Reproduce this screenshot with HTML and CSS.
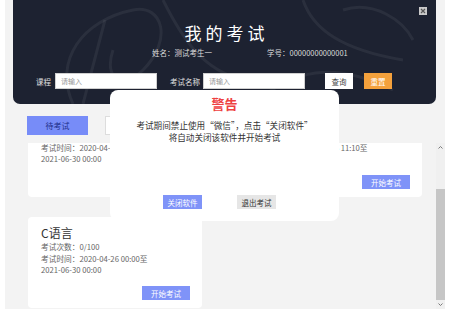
FILE: index.html
```html
<!DOCTYPE html>
<html lang="zh-CN">
<head>
  <meta charset="UTF-8">
  <title>我的考试</title>
  <meta name="viewport" content="width=device-width, initial-scale=1.0">
  <link rel="stylesheet" href="styles.css">
</head>
<body>
  <div class="page">
    <header class="banner">
      <svg class="chalk" viewBox="0 0 423 104" preserveAspectRatio="none">
        <path d="M60 104 C 40 60, 70 20, 120 10 C 150 4, 160 40, 130 70 C 110 90, 90 80, 100 50" />
        <path d="M70 104 L 92 20" />
        <path d="M150 0 C 170 40, 190 70, 230 80" />
        <path d="M290 0 C 300 30, 330 50, 390 60" />
        <path d="M330 10 C 360 0, 390 20, 400 40" />
        <path d="M240 104 C 280 70, 320 60, 380 90" />
      </svg>
      <button class="close-btn" type="button">
        <svg viewBox="0 0 8 8" width="8" height="8">
          <rect x="0" y="0" width="8" height="8" fill="#c9c9c9" />
          <path d="M2 2 L6 6 M6 2 L2 6" stroke="#555" stroke-width="1.2" />
        </svg>
      </button>
      <h1 class="title">我的考试</h1>
      <div class="student">
        <span>姓名：测试考生一</span>
        <span>学号：00000000000001</span>
      </div>
      <form class="search" autocomplete="off">
        <label for="course">课程</label>
        <input type="text" id="course" placeholder="请输入">
        <label for="examName" class="label-wide">考试名称</label>
        <input type="text" id="examName" placeholder="请输入">
        <button type="button" class="btn-query">查询</button>
        <button type="button" class="btn-reset">重置</button>
      </form>
    </header>

    <nav class="tabs">
      <span class="tab active">待考试</span>
      <span class="tab">已考试</span>
    </nav>

    <div class="exam-area">
      <div class="exam-list" id="examList">
        <div class="exam-grid">
          <div class="exam-card">
            <div class="exam-name">Java程序设计</div>
            <div class="exam-info">考试次数：0/100</div>
            <div class="exam-info">考试时间：2020-04-26 00:00至<br>2021-06-30 00:00</div>
            <button type="button" class="btn-start">开始考试</button>
          </div>
          <div class="exam-card">
            <div class="exam-name">数据结构</div>
            <div class="exam-info">考试次数：0/100</div>
            <div class="exam-info">考试时间：2020-04-26 11:10至<br>2021-06-30 00:00</div>
            <button type="button" class="btn-start">开始考试</button>
          </div>
          <div class="exam-card">
            <div class="exam-name">C语言</div>
            <div class="exam-info">考试次数：0/100</div>
            <div class="exam-info">考试时间：2020-04-26 00:00至<br>2021-06-30 00:00</div>
            <button type="button" class="btn-start">开始考试</button>
          </div>
        </div>
      </div>
      <div class="scrollbar">
        <svg class="arrow" viewBox="0 0 9 9" width="9" height="9">
          <path d="M2.5 5.5 L4.5 3.5 L6.5 5.5" />
        </svg>
        <div class="track"><span class="thumb"></span></div>
        <svg class="arrow" viewBox="0 0 9 9" width="9" height="9">
          <path d="M2.5 3.5 L4.5 5.5 L6.5 3.5" />
        </svg>
      </div>
    </div>

    <div class="modal">
      <div class="modal-title">警告</div>
      <div class="modal-text">
        考试期间禁止使用“微信”，点击“关闭软件”<br>
        将自动关闭该软件并开始考试
      </div>
      <div class="modal-actions">
        <button type="button" class="btn-close-app">关闭软件</button>
        <button type="button" class="btn-quit">退出考试</button>
      </div>
    </div>
  </div>
  <script>
    // list starts scrolled to the end
    const list = document.getElementById('examList');
    list.scrollTop = list.scrollHeight;
  </script>
</body>
</html>
```

FILE: styles.css
```css
body {
  margin: 0;
  background: #fff;
  font-family: 'Noto Sans CJK SC', 'Noto Sans', sans-serif;
  color: #333;
}
button {
  font-family: inherit;
  border: none;
  padding: 0;
  cursor: pointer;
}
.page {
  position: relative;
  margin: 0 5px;
  width: 440px;
  height: 309px;
  background: #f3f3f3;
  display: flex;
  flex-direction: column;
}
.banner {
  position: relative;
  margin: 0 9px 0 8px;
  height: 104px;
  box-sizing: border-box;
  padding: 23px 0 0 0;
  background: #1d2231;
  border-radius: 0 0 7px 7px;
  overflow: hidden;
  color: #fff;
}
.chalk {
  position: absolute;
  left: 0;
  top: 0;
  width: 100%;
  height: 100%;
  fill: none;
  stroke: rgba(255, 255, 255, 0.06);
  stroke-width: 3;
}
.close-btn {
  position: absolute;
  right: 9px;
  top: 7px;
  width: 8px;
  height: 8px;
  background: transparent;
  display: block;
}
.close-btn svg {
  display: block;
}
.title {
  position: relative;
  margin: 0;
  font-size: 17px;
  line-height: 20px;
  font-weight: 400;
  letter-spacing: 4px;
  padding-left: 4px;
  text-align: center;
}
.student {
  position: relative;
  display: flex;
  gap: 55px;
  padding-left: 139px;
  margin-top: 5px;
  font-size: 7.5px;
  line-height: 10px;
  color: #dcdcdc;
}
.search {
  position: relative;
  display: flex;
  align-items: center;
  margin-top: 15px;
  padding-left: 23px;
  height: 16px;
  font-size: 7.5px;
  color: #e0e0e0;
}
.search label {
  margin-right: 4px;
}
.search .label-wide {
  margin-left: 13px;
  margin-right: 3px;
}
.search input {
  box-sizing: border-box;
  width: 102px;
  height: 16px;
  border: 1px solid #d0d0d0;
  background: #fff;
  padding: 0 5px;
  font-family: inherit;
  font-size: 7px;
  outline: none;
}
.search input::placeholder {
  color: #999;
}
.btn-query, .btn-reset {
  width: 28px;
  height: 16px;
  font-size: 7.5px;
}
.btn-query {
  margin-left: 20px;
  background: #fff;
  color: #444;
}
.btn-reset {
  margin-left: 11px;
  background: #f4a13c;
  color: #fff;
}
.tabs {
  display: flex;
  gap: 17px;
  margin: 12px 0 8px 22px;
}
.tab {
  box-sizing: border-box;
  width: 61px;
  height: 19px;
  line-height: 17px;
  text-align: center;
  font-size: 8px;
  background: #fff;
  border: 1px solid #ddd;
  color: #555;
}
.tab.active {
  background: #778cf8;
  border-color: #778cf8;
  color: #1e2f8a;
}
.exam-area {
  flex: 1;
  min-height: 0;
  display: flex;
}
.exam-list {
  flex: 1;
  overflow: hidden;
}
.scrollbar {
  width: 9px;
  display: flex;
  flex-direction: column;
  background: #f0f0f0;
}
.arrow {
  display: block;
  fill: none;
  stroke: #7a7a7a;
  stroke-width: 1;
}
.track {
  flex: 1;
  display: flex;
  flex-direction: column;
  justify-content: flex-end;
}
.thumb {
  display: block;
  height: 111px;
  background: #c6c6c6;
}
.exam-grid {
  display: grid;
  grid-template-columns: 174px 174px;
  justify-content: space-between;
  row-gap: 20px;
  padding: 18px 14px 1px 23px;
}
.exam-card {
  box-sizing: border-box;
  height: 91px;
  background: #fff;
  border-radius: 4px;
  padding: 9px 12px 8px 13px;
  display: flex;
  flex-direction: column;
}
.exam-name {
  font-size: 12px;
  line-height: 14px;
  color: #333;
  margin-bottom: 1px;
}
.exam-info {
  font-size: 7.7px;
  line-height: 11.5px;
  color: #666;
}
.btn-start {
  margin-top: auto;
  align-self: flex-end;
  width: 48px;
  height: 14px;
  background: #7f93f8;
  color: #fff;
  font-size: 7.5px;
}
.modal {
  position: absolute;
  left: 105px;
  top: 90px;
  width: 229px;
  height: 131px;
  box-sizing: border-box;
  padding: 6px 0 12px 0;
  background: #fff;
  border-radius: 8px;
  display: flex;
  flex-direction: column;
  align-items: center;
}
.modal-title {
  font-size: 13px;
  line-height: 16px;
  font-weight: 700;
  color: #ee4040;
}
.modal-text {
  margin-top: 7px;
  font-size: 8.6px;
  line-height: 12px;
  text-align: center;
  color: #333;
}
.modal-actions {
  margin-top: auto;
  display: flex;
  gap: 35px;
  padding-right: 10px;
}
.btn-close-app, .btn-quit {
  width: 39px;
  height: 14px;
  font-size: 7.5px;
}
.btn-close-app {
  background: #7f93f8;
  color: #fff;
}
.btn-quit {
  background: #e6e6e6;
  color: #333;
}
```
